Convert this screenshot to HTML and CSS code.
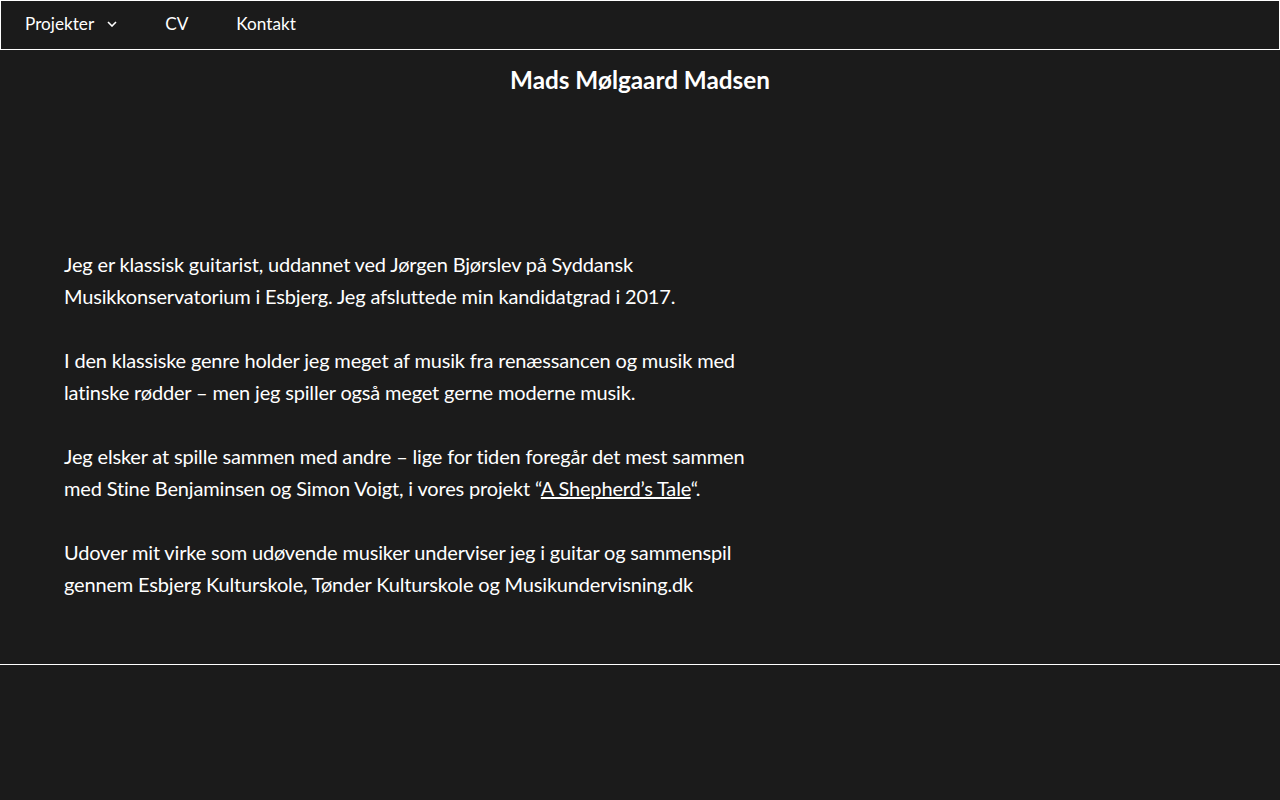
FILE: index.html
```html
<!DOCTYPE html>
<html lang="da">
<head>
  <meta charset="UTF-8">
  <meta name="viewport" content="width=device-width, initial-scale=1.0">
  <title>Mads Mølgaard Madsen</title>
  <link rel="stylesheet" href="styles.css">
</head>
<body>
  <nav class="nav">
    <a class="nav-item" href="#">Projekter
      <svg class="chevron" width="10" height="6" viewBox="0 0 10 6"><polyline points="1,1 5,5 9,1" fill="none" stroke="#fff" stroke-width="1.6"/></svg>
    </a>
    <a class="nav-item" href="#">CV</a>
    <a class="nav-item" href="#">Kontakt</a>
  </nav>

  <header class="site-header">
    <h1>Mads Mølgaard Madsen</h1>
  </header>

  <main class="content">
    <p>Jeg er klassisk guitarist, uddannet ved Jørgen Bjørslev på Syddansk Musikkonservatorium i Esbjerg. Jeg afsluttede min kandidatgrad i 2017.</p>
    <p>I den klassiske genre holder jeg meget af musik fra renæssancen og musik med latinske rødder – men jeg spiller også meget gerne moderne musik.</p>
    <p>Jeg elsker at spille sammen med andre – lige for tiden foregår det mest sammen med Stine Benjaminsen og Simon Voigt, i vores projekt “<a href="#">A Shepherd’s Tale</a>“.</p>
    <p>Udover mit virke som udøvende musiker underviser jeg i guitar og sammenspil gennem Esbjerg Kulturskole, Tønder Kulturskole og Musikundervisning.dk</p>
  </main>

  <footer class="footer"></footer>
</body>
</html>
```

FILE: styles.css
```css
body {
  font-family: Lato, 'Open Sans', sans-serif;
  background-color: #1b1b1b;
  color: #fff;
  margin: 0;
  padding: 0;
}
.nav {
  display: flex;
  align-items: center;
  border: 1px solid #fff;
  padding: 0 0 3px 0;
  height: 45px;
}
.nav-item {
  display: flex;
  align-items: center;
  gap: 13px;
  padding: 0 24px;
  font-size: 17.2px;
  color: #fff;
  text-decoration: none;
}
.chevron {
  margin-top: 1px;
}
.site-header h1 {
  margin: 14px 0 0;
  text-align: center;
  font-size: 24.3px;
  line-height: 32px;
  font-weight: 700;
}
.content {
  width: 704px;
  padding: 152px 64px 64px;
  font-size: 20px;
  line-height: 32px;
  letter-spacing: -0.17px;
}
.content p {
  margin: 0 0 32px;
}
.content p:last-child {
  margin-bottom: 0;
}
.content a {
  color: #fff;
  text-decoration: underline;
}
.footer {
  border-top: 1px solid #fff;
  height: 135px;
}
```
